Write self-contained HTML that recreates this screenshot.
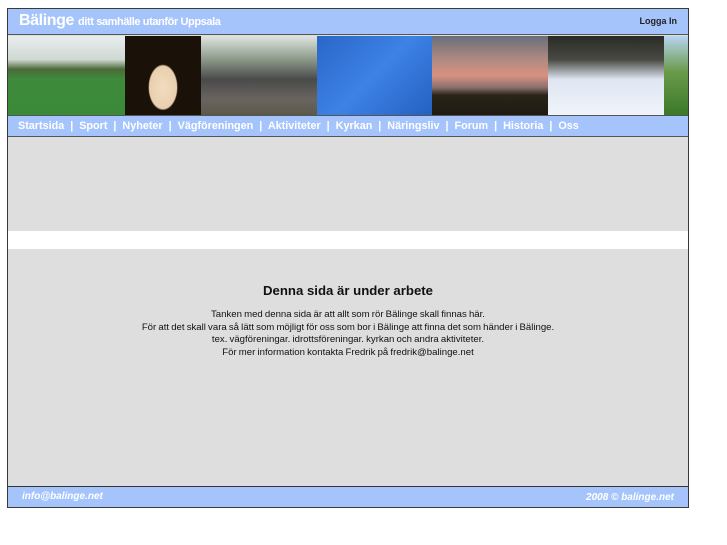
<!DOCTYPE html>
<html><head><meta charset="utf-8"><style>
*{margin:0;padding:0;box-sizing:border-box}
body{width:727px;height:545px;background:#fff;font-family:"Liberation Sans",sans-serif;position:relative;overflow:hidden}
.wrap{position:absolute;left:7px;top:8px;width:682px;height:500px;border:1px solid #3a3a3a;background:#dedede}
.hdr{position:absolute;left:0;top:0;width:680px;height:26px;background:#a6c4fc;border-bottom:1px solid #555}
.logo{position:absolute;left:11px;top:3px;color:#fff;font-weight:bold;font-size:16px;letter-spacing:-0.4px}
.logo span{font-size:11px}
.login{position:absolute;right:11px;top:7px;font-size:9px;font-weight:bold;color:#222}
.ph{position:absolute;top:27px;height:79px}
.nav{position:absolute;left:0;top:106px;width:680px;height:22px;background:#a6c4fc;border-top:1px solid #555;border-bottom:1px solid #555;color:#fff;font-weight:bold;font-size:10.8px;padding:4px 0 0 10px;white-space:pre}
.white{position:absolute;left:0;top:222px;width:680px;height:18px;background:#fff}
.txt{position:absolute;left:0;top:274px;width:680px;text-align:center;color:#111}
.txt h1{font-size:13.2px;font-weight:bold;margin-bottom:11px}
.txt p{font-size:9.6px;line-height:12.5px;word-spacing:-0.5px}
.ftr{position:absolute;left:0;top:477px;width:680px;height:21px;background:#a6c4fc;border-top:1px solid #333;color:#fff;font-style:italic;font-weight:bold;font-size:10px}
</style></head><body>
<div class="wrap">
<div class="hdr"><div class="logo">Bälinge <span>ditt samhälle utanför Uppsala</span></div><div class="login">Logga In</div></div>
<div class="ph" style="left:0;width:117px;background:linear-gradient(#e8eef0 0%,#cfd8d0 30%,#4c6a3a 42%,#3f8a3c 55%,#3a8a38 100%)"></div>
<div class="ph" style="left:117px;width:76px;background:radial-gradient(ellipse 30% 45% at 50% 65%,#f3dcc0 0%,#e8cfae 60%,#1a1208 65%),#100c06"></div>
<div class="ph" style="left:193px;width:116px;background:linear-gradient(#e0e4e0 0%,#8a9888 30%,#4a4a4a 55%,#6a6460 80%,#5a5a4a 100%)"></div>
<div class="ph" style="left:309px;width:115px;background:linear-gradient(135deg,#2a66c8,#3d82e6 50%,#2460c0)"></div>
<div class="ph" style="left:424px;width:116px;background:linear-gradient(#6a6e7a 0%,#b08a80 30%,#d89080 50%,#8a7070 65%,#2a2418 75%,#1e1a12 100%)"></div>
<div class="ph" style="left:540px;width:116px;background:linear-gradient(#2a2a26 0%,#4a4a44 30%,#dfe6f2 55%,#f0f4fa 100%)"></div>
<div class="ph" style="left:656px;width:24px;background:linear-gradient(#b8d4f0 0%,#6a9a4a 45%,#3a7a2a 100%)"></div>
<div class="nav">Startsida  |  Sport  |  Nyheter  |  Vägföreningen  |  Aktiviteter  |  Kyrkan  |  Näringsliv  |  Forum  |  Historia  |  Oss</div>
<div class="white"></div>
<div class="txt"><h1>Denna sida är under arbete</h1>
<p>Tanken med denna sida är att allt som rör Bälinge skall finnas här.<br>För att det skall vara så lätt som möjligt för oss som bor i Bälinge att finna det som händer i Bälinge.<br>tex. vägföreningar. idrottsföreningar. kyrkan och andra aktiviteter.<br>För mer information kontakta Fredrik på fredrik@balinge.net</p></div>
<div class="ftr"><span style="position:absolute;left:14px;top:4px">info@balinge.net</span><span style="position:absolute;right:14px;top:5px">2008 © balinge.net</span></div>
</div>
</body></html>
